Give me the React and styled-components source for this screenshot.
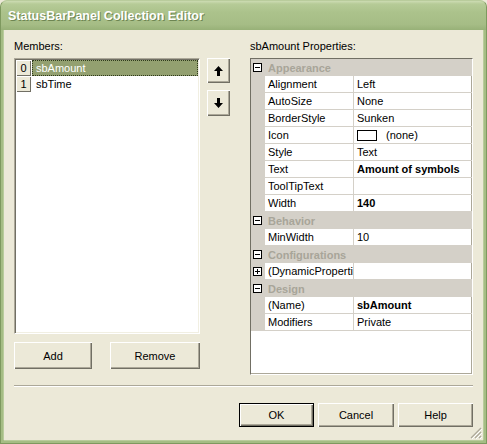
import React from 'react';
import styled, { createGlobalStyle } from 'styled-components';

const GlobalStyle = createGlobalStyle`
  html, body {
    margin: 0;
    padding: 0;
    overflow: hidden;
    background: #ece9d8;
  }
  * { box-sizing: border-box; }
`;

const Window = styled.div`
  width: 487px;
  height: 444px;
  display: flex;
  flex-direction: column;
  background: #a5bd84;
  border: 1px solid #7e995f;
  border-top-color: #b9cc9c;
  border-radius: 7px 7px 0 0;
  overflow: hidden;
  font-family: "Liberation Sans", Arial, sans-serif;
  font-size: 11px;
  color: #000;
`;

const TitleBar = styled.div`
  height: 29px;
  flex: none;
  display: flex;
  align-items: center;
  padding: 1px 0 0 7px;
  background: linear-gradient(to bottom, #cddcb3 0, #b6cb97 3px, #abc28b 40%, #a6bd86 80%, #98b178 100%);
  color: #fff;
  font-weight: bold;
  font-size: 12.5px;
  text-shadow: 1px 1px 0 #6d8552;
`;

const Body = styled.div`
  position: relative;
  flex: 1;
  margin: 0 3px 3px 3px;
  padding: 10px 10px 0 10px;
  background: #ece9d8;
  box-shadow: -1px 0 0 #b9cc9c, 1px 0 0 #b9cc9c, 0 1px 0 #b9cc9c;
  display: flex;
  flex-direction: column;
`;

const MainRow = styled.div`
  height: 335px;
  display: flex;
`;

const Column = styled.div`
  width: ${p => p.$width}px;
  display: flex;
  flex-direction: column;
`;

const Label = styled.div`
  height: 13px;
  line-height: 13px;
  margin-bottom: 5px;
`;

const SunkenBox = styled.div`
  background: #fff;
  border: 1px solid;
  border-color: #aca899 #fff #fff #aca899;
  box-shadow: inset 1px 1px 0 #716f64, inset -1px -1px 0 #f1efe2;
  padding: 2px;
`;

const ListBox = styled(SunkenBox)`
  height: 276px;
  padding: 1px;
`;

const ListRow = styled.div`
  height: 16px;
  display: flex;
  align-items: stretch;
`;

const IndexCell = styled.div`
  width: 15px;
  flex: none;
  display: flex;
  align-items: center;
  justify-content: center;
  background: #ece9d8;
  box-shadow: inset 1px 1px 0 #fff, inset -1px -1px 0 #716f64;
  font-size: 11px;
`;

const ItemText = styled.div`
  flex: 1;
  display: flex;
  align-items: center;
  padding-left: 4px;
  margin-left: 1px;
  background: ${p => (p.$selected ? '#93a070' : 'transparent')};
  color: ${p => (p.$selected ? '#fff' : '#000')};
  outline: ${p => (p.$selected ? '1px dotted #2f3a1c' : 'none')};
  outline-offset: -1px;
`;

const ButtonRow = styled.div`
  display: flex;
  justify-content: ${p => p.$justify || 'flex-end'};
  gap: ${p => p.$gap || 0}px;
  margin-top: ${p => p.$top || 0}px;
`;

const Button = styled.button`
  width: ${p => p.$width}px;
  height: ${p => p.$height || 24}px;
  padding: 0;
  background: #ece9d8;
  border: ${p => (p.$default ? '1px solid #000' : '0')};
  box-shadow: inset 1px 1px 0 #fff, inset -1px -1px 0 #716f64, inset -2px -2px 0 #aca899;
  font-family: "Liberation Sans", Arial, sans-serif;
  font-size: 11px;
  color: #000;
  display: flex;
  align-items: center;
  justify-content: center;
`;

const ArrowColumn = styled.div`
  width: 23px;
  margin: 0 20px 0 7px;
  padding-top: 18px;
  display: flex;
  flex-direction: column;
  gap: 7px;
`;

const Grid = styled.div`
  height: 317px;
  background: #fff;
  border: 1px solid;
  border-color: #716f64 #fff #fff #716f64;
  box-shadow: inset -1px -1px 0 #aca899;
`;

const CategoryRow = styled.div`
  height: 17px;
  display: flex;
  align-items: center;
  background: #d4d0c8;
  font-weight: bold;
  color: #a8a599;
`;

const Gutter = styled.div`
  width: 14px;
  flex: none;
  align-self: stretch;
  display: flex;
  align-items: center;
  justify-content: center;
  background: #d4d0c8;
  padding-right: 1px;
`;

const CategoryText = styled.div`
  padding-left: 3px;
`;

const PropRow = styled.div`
  height: 17px;
  display: flex;
`;

const NameCell = styled.div`
  width: 89px;
  flex: none;
  padding-left: 3px;
  display: flex;
  align-items: center;
  border-right: 1px solid #d4d0c8;
  border-bottom: 1px solid #d4d0c8;
  white-space: nowrap;
  overflow: hidden;
`;

const ValueCell = styled.div`
  flex: 1;
  padding-left: 3px;
  display: flex;
  align-items: center;
  gap: 9px;
  border-bottom: 1px solid #d4d0c8;
  font-weight: ${p => (p.$bold ? 'bold' : 'normal')};
  white-space: nowrap;
  overflow: hidden;
`;

const IconSwatch = styled.span`
  width: 20px;
  height: 11px;
  border: 1px solid #000;
  background: #fff;
`;

const Separator = styled.div`
  margin-top: 10px;
  height: 2px;
  border-top: 1px solid #aca899;
  border-bottom: 1px solid #fff;
`;

const Grip = styled.svg`
  position: absolute;
  right: 1px;
  bottom: 1px;
`;

const Expander = ({ open }) => (
  <svg width="9" height="9" viewBox="0 0 9 9">
    <rect x="0.5" y="0.5" width="8" height="8" fill="#fff" stroke="#000" />
    <line x1="2" y1="4.5" x2="7" y2="4.5" stroke="#000" />
    {!open && <line x1="4.5" y1="2" x2="4.5" y2="7" stroke="#000" />}
  </svg>
);

const Arrow = ({ down }) => (
  <svg width="9" height="10" viewBox="0 0 9 10" style={down ? { transform: 'rotate(180deg)' } : undefined}>
    <polygon points="4.5,0 9,5 6,5 6,10 3,10 3,5 0,5" fill="#000" />
  </svg>
);

const members = ['sbAmount', 'sbTime'];

const sections = [
  {
    name: 'Appearance',
    props: [
      ['Alignment', 'Left'],
      ['AutoSize', 'None'],
      ['BorderStyle', 'Sunken'],
      ['Icon', '(none)', false, true],
      ['Style', 'Text'],
      ['Text', 'Amount of symbols', true],
      ['ToolTipText', ''],
      ['Width', '140', true],
    ],
  },
  { name: 'Behavior', props: [['MinWidth', '10']] },
  { name: 'Configurations', props: [['(DynamicProperties)', '', false, false, true]] },
  {
    name: 'Design',
    props: [
      ['(Name)', 'sbAmount', true],
      ['Modifiers', 'Private'],
    ],
  },
];

export default function App() {
  return (
    <>
      <GlobalStyle />
      <Window>
        <TitleBar>StatusBarPanel Collection Editor</TitleBar>
        <Body>
          <MainRow>
            <Column $width={186}>
              <Label>Members:</Label>
              <ListBox>
                {members.map((m, i) => (
                  <ListRow key={m}>
                    <IndexCell>{i}</IndexCell>
                    <ItemText $selected={i === 0}>{m}</ItemText>
                  </ListRow>
                ))}
              </ListBox>
              <ButtonRow $justify="space-between" $top={8}>
                <Button $width={78} $height={27}>Add</Button>
                <Button $width={90} $height={27}>Remove</Button>
              </ButtonRow>
            </Column>
            <ArrowColumn>
              <Button $width={23} $height={25}><Arrow /></Button>
              <Button $width={23} $height={26}><Arrow down /></Button>
            </ArrowColumn>
            <Column $width={223}>
              <Label>sbAmount Properties:</Label>
              <Grid>
                {sections.map(s => (
                  <React.Fragment key={s.name}>
                    <CategoryRow>
                      <Gutter><Expander open /></Gutter>
                      <CategoryText>{s.name}</CategoryText>
                    </CategoryRow>
                    {s.props.map(([n, v, bold, icon, collapsed]) => (
                      <PropRow key={n}>
                        <Gutter>{collapsed && <Expander />}</Gutter>
                        <NameCell>{n}</NameCell>
                        <ValueCell $bold={bold}>
                          {icon && <IconSwatch />}
                          {v}
                        </ValueCell>
                      </PropRow>
                    ))}
                  </React.Fragment>
                ))}
              </Grid>
            </Column>
          </MainRow>
          <Separator />
          <ButtonRow $gap={4} $top={16}>
            <Button $width={75} $default>OK</Button>
            <Button $width={76}>Cancel</Button>
            <Button $width={75}>Help</Button>
          </ButtonRow>
          <Grip width="12" height="12" viewBox="0 0 12 12">
            <path d="M11 1 L1 11 M11 5 L5 11 M11 9 L9 11" stroke="#aca899" strokeWidth="1.2" />
            <path d="M12 2 L2 12 M12 6 L6 12 M12 10 L10 12" stroke="#fff" strokeWidth="1" />
          </Grip>
        </Body>
      </Window>
    </>
  );
}
